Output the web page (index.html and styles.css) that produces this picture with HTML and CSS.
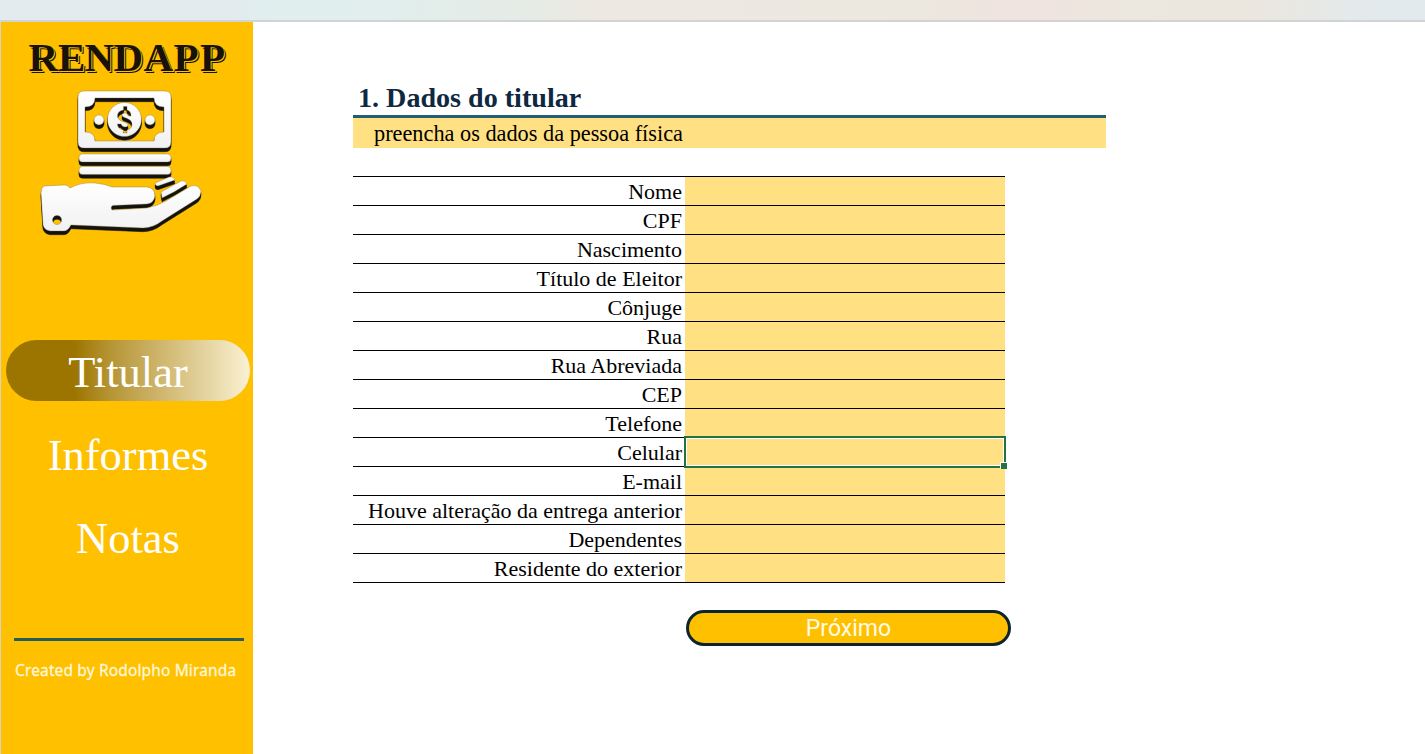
FILE: index.html
```html
<!DOCTYPE html>
<html lang="pt-BR">
<head>
<meta charset="utf-8">
<title>RendApp</title>
<link rel="stylesheet" href="styles.css">
</head>
<body>
<div class="ribbon"></div>
<div class="layout">
  <aside class="sidebar">
    <svg class="brand" viewBox="0 0 252 63" role="img" aria-label="RENDAPP">
      <text class="brand-face" x="28.500 58 84.500 113.500 143.500 173.500 200" y="49">RENDAPP</text>
    </svg>
    <svg class="logo" viewBox="0 0 180 160" aria-hidden="true">
      <defs>
        <g id="art">
          <path fill-rule="evenodd" d="M54 6H135Q141 6 141 12V57Q141 63 135 63H54Q48 63 48 57V12Q48 6 54 6ZM65 13Q65 22 55 22V47Q65 47 65 56H124Q124 47 134 47V22Q124 22 124 13Z"/>
          <path fill-rule="evenodd" d="M94.500 17.500A17 17 0 1 1 94.400 17.500ZM93.500 21.500V25Q87.500 26 87.500 31Q87.500 35 94 37Q98 38 98 40Q98 42 95 42Q92 42 91 39H87.500Q87.500 44 93.500 45V48H97V45Q102 44 102 39Q102 35 96 33Q92 32 92 30Q92 28 95 28Q98 28 98 31H101Q101 26 97 25V21.500Z"/>
          <circle cx="69" cy="35" r="5"/>
          <circle cx="120" cy="35" r="5"/>
          <rect x="49" y="69" width="92" height="8" rx="3.500"/>
          <rect x="49" y="81.500" width="92" height="8" rx="3.500"/>
          <path d="M125 98L139 92Q143 91 145 95L128 101Q125 101 125 98Z"/>
          <path d="M131 107L151 96Q155 95 157 99Q145 107 132 113Z"/>
          <path fill-rule="evenodd" d="M14 101L35 100Q38 100 40 103Q51 97 65 98Q75 99 82 102L117 102Q125 103 125 111Q124 118 117 119L83 120.500Q80 121.500 82 125L117 123Q127 121 136 116L161 101Q168 99 171 106Q171 111 167 114L132 136Q123 143 113 143L41 140Q38 146 34 146H20Q14 145 13 140L11 108Q11 103 14 101ZM27 130.500A4.500 4.500 0 1 0 27.100 130.500Z"/>
        </g>
        <linearGradient id="sheen" x1="0" y1="0" x2="0" y2="1">
          <stop offset="0" stop-color="#fff"/>
          <stop offset="1" stop-color="#f1f1f3"/>
        </linearGradient>
      </defs>
      <use href="#art" class="art-depth" y="3.700"/>
      <use href="#art" class="art-depth" y="2"/>
      <use href="#art" class="art-face"/>
    </svg>
    <nav class="menu">
      <a class="menu-item active">Titular</a>
      <a class="menu-item">Informes</a>
      <a class="menu-item">Notas</a>
    </nav>
    <footer class="credit">Created by Rodolpho Miranda</footer>
  </aside>
  <main class="sheet">
    <h1 class="title">1. Dados do titular</h1>
    <p class="hint">preencha os dados da pessoa física</p>
    <div class="form">
      <div class="row"><span class="label">Nome</span><span class="cell"></span></div>
      <div class="row"><span class="label">CPF</span><span class="cell"></span></div>
      <div class="row"><span class="label">Nascimento</span><span class="cell"></span></div>
      <div class="row"><span class="label">Título de Eleitor</span><span class="cell"></span></div>
      <div class="row"><span class="label">Cônjuge</span><span class="cell"></span></div>
      <div class="row"><span class="label">Rua</span><span class="cell"></span></div>
      <div class="row"><span class="label">Rua Abreviada</span><span class="cell"></span></div>
      <div class="row"><span class="label">CEP</span><span class="cell"></span></div>
      <div class="row"><span class="label">Telefone</span><span class="cell"></span></div>
      <div class="row"><span class="label">Celular</span><span class="cell selected"></span></div>
      <div class="row"><span class="label">E-mail</span><span class="cell"></span></div>
      <div class="row"><span class="label">Houve alteração da entrega anterior</span><span class="cell"></span></div>
      <div class="row"><span class="label">Dependentes</span><span class="cell"></span></div>
      <div class="row"><span class="label">Residente do exterior</span><span class="cell"></span></div>
    </div>
    <button class="next" type="button">Próximo</button>
  </main>
</div>
</body>
</html>
```
FILE: styles.css
```css
* { box-sizing: border-box; }

body {
  margin: 0;
  height: 754px;
  overflow: hidden;
  background: #fff;
  font-family: "Liberation Serif", serif;
}

.ribbon {
  height: 22px;
  border-bottom: 2px solid #d1d3d4;
  background: linear-gradient(90deg, #e3ebef 0%, #e3ebee 16%, #e0eeee 19%, #e1eeed 27%, #e6ebe6 37%, #ede8e1 42%, #ece7df 65%, #efe4df 70%, #efe4df 74%, #ece7df 79%, #ebe7df 88%, #e3eaec 96%, #e2eaee 100%);
}

.layout {
  display: flex;
  height: 732px;
}

.sidebar {
  display: flex;
  flex-direction: column;
  flex: none;
  width: 253px;
  border-left: 1px solid #d8d4c4;
  background: #ffc000;
}

.brand {
  display: block;
  flex: none;
  width: 252px;
  height: 63px;
  margin-left: -1px;
  overflow: visible;
  font-family: "Liberation Serif", serif;
  font-size: 41px;
  font-weight: bold;
}

.brand-face {
  fill: #17130a;
  text-shadow: 1px 1px 0 #ffc000, 2px 2px 0 #17130a;
}

.logo {
  display: block;
  flex: none;
  width: 180px;
  height: 160px;
  margin: 0 0 0 29px;
}

.art-depth { fill: #14130f; stroke: #14130f; stroke-width: 0.5; }
.art-face { fill: url(#sheen); stroke: #716532; stroke-width: 0.35; }

.menu {
  display: flex;
  flex-direction: column;
  gap: 22px;
  margin: 95px 3px 0 5px;
}

.menu-item {
  height: 61px;
  border-radius: 31px;
  color: #fff;
  font-size: 44.5px;
  line-height: 64px;
  text-align: center;
}

.menu-item.active {
  background: linear-gradient(90deg, #9c7500 0%, #9c7500 28%, #b69535 43%, #fbf1d3 100%);
}

.credit {
  margin: 71px 9px 0 13px;
  padding: 17px 0 0 1px;
  border-top: 3px solid #245e5c;
  color: #fff7d8;
  font-family: "Noto Sans", sans-serif;
  font-size: 15.5px;
  letter-spacing: 0.14px;
  -webkit-text-stroke: 0.3px #fff7d8;
  line-height: 24px;
  white-space: nowrap;
}

.sheet {
  display: flex;
  flex-direction: column;
  width: 753px;
  margin: 61px 0 0 100px;
}

.title {
  height: 35px;
  margin: 0;
  padding-left: 5px;
  border-bottom: 3px solid #215e73;
  color: #0e2841;
  font-size: 28.1px;
  line-height: 29px;
}

.hint {
  height: 30px;
  margin: 0 0 28px;
  padding-left: 21px;
  background: #ffe082;
  font-size: 22.3px;
  line-height: 32px;
}

.form {
  width: 652px;
  border-top: 1px solid #000;
}

.row {
  display: flex;
  height: 29px;
  border-bottom: 1px solid #000;
}

.label {
  width: 332px;
  padding-right: 3px;
  font-size: 22px;
  line-height: 29px;
  text-align: right;
  white-space: nowrap;
}

.cell {
  position: relative;
  flex: 1;
  background: #ffe082;
}

.selected { z-index: 1; }

.selected::before {
  content: "";
  position: absolute;
  inset: -2px -1px;
  border: 2px solid #217346;
  box-shadow: inset 0 0 0 1px #fff;
}

.selected::after {
  content: "";
  position: absolute;
  right: -2px;
  bottom: -3px;
  width: 6px;
  height: 6px;
  border: solid #fff;
  border-width: 1px 0 0 1px;
  background: #217346;
}

.next {
  width: 325px;
  height: 36px;
  margin: 27px 0 0 333px;
  padding: 1px 0 0;
  border: 3px solid #0c242c;
  border-radius: 18px;
  background: #ffc000;
  color: #fffbe6;
  font-family: Roboto, sans-serif;
  font-size: 23px;
  line-height: 30px;
}
```
